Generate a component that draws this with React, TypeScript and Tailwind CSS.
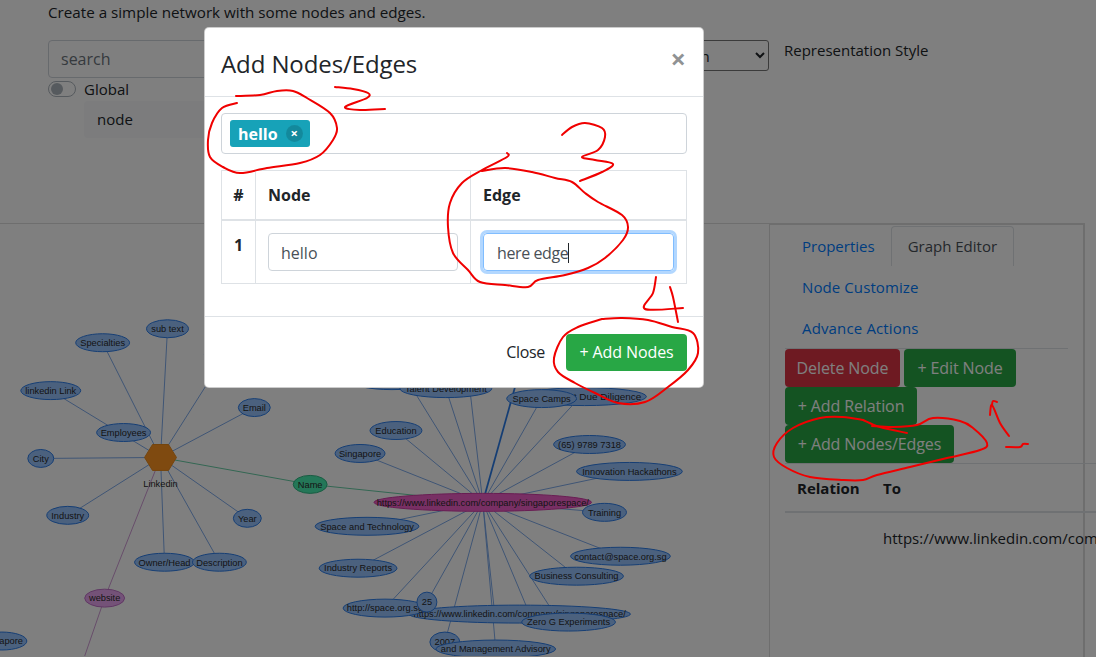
import React from 'react';

type GraphNode = { label: string; x: number; y: number; rx: number; ry?: number; color?: string; size?: number };

const BLUE = { fill: '#97c2fc', stroke: '#2b7ce9' };
const COLORS: Record<string, { fill: string; stroke: string }> = {
  blue: BLUE,
  purple: { fill: '#e9a5f0', stroke: '#c06fc8' },
  green: { fill: '#48eeb0', stroke: '#2fb884' },
  pink: { fill: '#f05fc8', stroke: '#d13aa6' },
};

const nodes: GraphNode[] = [
  { label: 'sub text', x: 167, y: 329, rx: 21 },
  { label: 'Specialties', x: 102, y: 343, rx: 27 },
  { label: 'linkedin Link', x: 50, y: 391, rx: 30 },
  { label: 'Employees', x: 123, y: 433, rx: 27 },
  { label: 'City', x: 40, y: 459, rx: 13 },
  { label: 'Email', x: 254, y: 408, rx: 16 },
  { label: 'Industry', x: 67, y: 516, rx: 21 },
  { label: 'Year', x: 247, y: 519, rx: 14 },
  { label: 'Owner/Head', x: 164, y: 563, rx: 30 },
  { label: 'Description', x: 219, y: 563, rx: 27 },
  { label: 'website', x: 104, y: 599, rx: 20, color: 'purple' },
  { label: 'Name', x: 310, y: 485, rx: 17, color: 'green' },
  { label: 'Singapore', x: 1, y: 642, rx: 25 },
  { label: '', x: 222, y: 355, rx: 18 },
  { label: '', x: 392, y: 381, rx: 42 },
  { label: 'Talent Development', x: 446, y: 389, rx: 46 },
  { label: 'Investment Due Diligence', x: 585, y: 397, rx: 62, size: 10 },
  { label: 'Space Camps', x: 542, y: 399, rx: 35 },
  { label: 'Education', x: 396, y: 431, rx: 26 },
  { label: 'Singapore', x: 360, y: 454, rx: 25 },
  { label: '(65) 9789 7318', x: 590, y: 445, rx: 36 },
  { label: 'Innovation Hackathons', x: 630, y: 472, rx: 53 },
  { label: 'https://www.linkedin.com/company/singaporespace/', x: 483, y: 503, rx: 109, color: 'pink' },
  { label: 'Training', x: 605, y: 513, rx: 22 },
  { label: 'Space and Technology', x: 367, y: 527, rx: 52 },
  { label: 'contact@space.org.sg', x: 621, y: 557, rx: 50 },
  { label: 'Industry Reports', x: 358, y: 569, rx: 39 },
  { label: 'Business Consulting', x: 577, y: 577, rx: 47 },
  { label: 'https://www.linkedin.com/company/singaporespace/', x: 520, y: 615, rx: 111 },
  { label: 'http://space.org.sg', x: 385, y: 609, rx: 42 },
  { label: '25', x: 427, y: 603, rx: 10, ry: 10 },
  { label: 'Zero G Experiments', x: 569, y: 623, rx: 47 },
  { label: '2007', x: 445, y: 643, rx: 15, ry: 10 },
  { label: 'and Management Advisory', x: 496, y: 650, rx: 60 },
];

// far ends of the edges that leave the two hubs
const linkedinEdges = [
  [167, 329], [102, 343], [50, 391], [40, 459], [254, 408], [68, 516], [247, 519], [164, 563], [219, 563], [205, 387],
];
const urlEdges = [
  [446, 389], [410, 385], [470, 389], [581, 397], [542, 399], [396, 431], [360, 454], [590, 445], [630, 472], [605, 513], [367, 527],
  [621, 557], [358, 569], [577, 577], [385, 609], [427, 603], [495, 615], [530, 615], [560, 623], [445, 643], [496, 650],
];

// page coordinates of the red pen marks
const scribbles: number[][][] = [
  [[236, 96], [260, 95], [277, 91], [293, 91], [307, 98], [330, 113], [337, 128], [333, 140], [320, 155], [300, 163], [267, 168], [240, 173], [223, 167], [210, 157], [208, 140], [212, 123], [222, 108], [237, 103]],
  [[335, 87], [353, 89], [368, 93], [367, 98], [345, 107], [360, 110], [385, 109]],
  [[562, 135], [572, 127], [585, 123], [602, 128], [605, 137], [598, 150], [582, 157], [595, 160], [613, 164], [602, 172], [580, 181]],
  [[507, 153], [507, 157], [482, 170], [462, 183], [450, 203], [448, 227], [453, 253], [468, 270], [480, 282], [505, 285], [528, 287], [538, 280], [565, 275], [588, 268], [605, 258], [623, 240], [628, 227], [622, 215], [598, 202], [585, 193], [572, 182], [555, 178], [532, 172], [505, 168], [482, 171]],
  [[656, 277], [653, 293], [645, 309], [683, 308]],
  [[670, 287], [673, 297], [678, 322]],
  [[602, 319], [622, 318], [648, 320], [672, 327], [693, 333], [698, 353], [688, 370], [668, 387], [645, 402], [618, 403], [595, 393], [575, 383], [558, 372], [554, 358], [563, 337], [578, 327], [602, 319]],
  [[863, 420], [843, 417], [820, 418], [793, 428], [777, 443], [774, 457], [787, 468], [810, 477], [843, 480], [863, 480], [877, 475], [910, 467], [947, 458], [980, 450], [987, 443], [973, 428], [960, 421], [933, 418], [917, 425], [893, 427], [872, 426]],
  [[863, 420], [880, 427], [907, 433]],
  [[1009, 436], [1000, 423], [992, 405], [990, 415]],
  [[992, 405], [993, 401], [997, 402]],
  [[1006, 447], [1020, 447], [1023, 444], [1028, 444]],
];

function smoothPath(pts: number[][]) {
  let d = `M${pts[0][0]} ${pts[0][1]}`;
  for (let i = 0; i < pts.length - 1; i++) {
    const p0 = pts[i - 1] || pts[i];
    const p1 = pts[i];
    const p2 = pts[i + 1];
    const p3 = pts[i + 2] || p2;
    const c1x = p1[0] + (p2[0] - p0[0]) / 6;
    const c1y = p1[1] + (p2[1] - p0[1]) / 6;
    const c2x = p2[0] - (p3[0] - p1[0]) / 6;
    const c2y = p2[1] - (p3[1] - p1[1]) / 6;
    d += ` C${c1x} ${c1y} ${c2x} ${c2y} ${p2[0]} ${p2[1]}`;
  }
  return d;
}

function NetworkGraph() {
  return (
    <svg viewBox="0 224 769 433" className="w-[769px] h-[433px] shrink-0 border-t border-[#dcdcdc]">
      {linkedinEdges.map(([x, y], i) => (
        <line key={i} x1={160} y1={458} x2={x} y2={y} stroke="#6fa0e8" strokeWidth="0.9" />
      ))}
      {urlEdges.map(([x, y], i) => (
        <line key={i} x1={483} y1={503} x2={x} y2={y} stroke="#6fa0e8" strokeWidth="0.9" />
      ))}
      <line x1={483} y1={503} x2={516} y2={385} stroke="#2b7ce9" strokeWidth="1.8" />
      <line x1={160} y1={458} x2={310} y2={485} stroke="#55c79a" strokeWidth="0.9" />
      <line x1={310} y1={485} x2={483} y2={503} stroke="#55c79a" strokeWidth="0.9" />
      <line x1={160} y1={458} x2={104} y2={599} stroke="#c98ed0" strokeWidth="0.9" />
      <line x1={104} y1={599} x2={84} y2={657} stroke="#c98ed0" strokeWidth="0.9" />

      {nodes.map((n, i) => {
        const c = COLORS[n.color || 'blue'];
        return (
          <g key={i}>
            <ellipse cx={n.x} cy={n.y} rx={n.rx} ry={n.ry || 9} fill={c.fill} stroke={c.stroke} strokeWidth="1" />
            <text
              x={n.x}
              y={n.y + 3.3}
              textAnchor="middle"
              fontSize={n.size || 9.3}
              fill="#2a2a2a"
              fontFamily="Liberation Sans, sans-serif"
            >
              {n.label}
            </text>
          </g>
        );
      })}

      <polygon points="144,458 152,445 168,445 176,458 168,471 152,471" fill="#ff9420" stroke="#e88a1c" strokeWidth="1" />
      <text x={160} y={488} textAnchor="middle" fontSize="9.3" fill="#2a2a2a" fontFamily="Liberation Sans, sans-serif">
        Linkedin
      </text>
    </svg>
  );
}

function PageBehind() {
  return (
    <div className="w-[1096px]">
      <div className="h-[223px] pl-12">
        <p className="text-[15.2px] leading-6 text-[#212529]">Create a simple network with some nodes and edges.</p>
        <div className="flex mt-4">
          <div className="w-[721px] flex justify-between items-start">
            <div className="w-[300px]">
              <div className="h-[38px] flex items-center rounded border border-[#ced4da] px-3 text-[#6c757d]">search</div>
              <div className="flex items-center gap-2 mt-[2px] h-[18px] text-[15px] text-[#212529]">
                <span className="w-7 h-4 rounded-full border border-[#adb5bd] flex items-center pl-[2px] bg-white">
                  <span className="w-3 h-3 rounded-full bg-[#adb5bd]" />
                </span>
                Global
              </div>
              <div className="ml-9 mt-[3px] h-[37px] flex items-center rounded bg-[#f8f9fa] pl-[13px] text-[15px] text-[#212529]">node</div>
            </div>
            <select defaultValue="Graph" className="w-[110px] h-[31px] bg-white border border-[#767676] rounded-[3px] pl-[2px] text-[15px] text-[#212529]">
              <option>Graph</option>
            </select>
          </div>
          <span className="ml-[15px] text-[15px] leading-5 text-[#212529]">Representation Style</span>
        </div>
      </div>
      <div className="flex">
        <NetworkGraph />
        <div className="w-[316px] h-[434px] shrink-0 border-l border-t-2 border-r-2 border-[#dcdcdc] pl-[15px]">
          <div className="w-[283px] border-b border-[#dee2e6] h-[124px] text-[15px] text-[#007bff]">
            <div className="flex items-end h-[41px]">
              <span className="pl-4 pr-4 h-10 flex items-center border border-transparent">Properties</span>
              <span className="px-4 h-10 flex items-center border border-b-0 border-[#dee2e6] rounded-t text-[#495057] -ml-px">Graph Editor</span>
            </div>
            <div className="pl-[17px] pt-[9px] leading-6 tracking-[0.1px]">Node Customize</div>
            <div className="pl-[17px] pt-[17px] leading-6 tracking-[0.15px]">Advance Actions</div>
          </div>
          <div className="w-[283px] text-white tracking-[-0.1px]">
            <div className="flex gap-1">
              <button className="w-[115px] h-[38px] rounded bg-[#dc3545]">Delete Node</button>
              <button className="w-[112px] h-[38px] rounded bg-[#28a745]">+ Edit Node</button>
            </div>
            <button className="block w-[132px] h-[38px] rounded bg-[#28a745]">+ Add Relation</button>
            <button className="block w-[169px] h-[38px] rounded bg-[#28a745]">+ Add Nodes/Edges</button>
          </div>
          <div className="w-[330px] text-[15px] text-[#212529]">
            <div className="flex h-[50px] items-center pt-[2px] border-t border-b-2 border-[#dee2e6] font-bold">
              <span className="w-[98px] pl-3">Relation</span>
              <span>To</span>
            </div>
            <div className="pl-[98px] pt-[14px] whitespace-nowrap">https://www.linkedin.com/company/singaporespace/</div>
          </div>
        </div>
      </div>
    </div>
  );
}

function AddNodesModal() {
  return (
    <div className="absolute inset-0 bg-black/50 pl-[204px] pt-[27px]">
      <div className="w-[500px] bg-white rounded-[5px] border border-black/20">
        <div className="h-[69px] border-b border-[#dee2e6] flex justify-between pl-4 pr-[17px] pt-[18px]">
          <h5 className="text-2xl leading-9 font-medium tracking-[-0.1px] text-[#212529]">Add Nodes/Edges</h5>
          <span className="text-[27px] leading-[25px] font-bold text-[#212529]/50">×</span>
        </div>
        <div className="p-4 h-[219px]">
          <div className="h-[41px] rounded border border-[#ced4da] flex items-center pl-2">
            <span className="w-[80px] h-[27px] rounded-[3px] bg-[#17a2b8] flex items-center pl-2 text-white font-bold">
              hello
              <span className="ml-2 w-[17px] h-[17px] rounded-full bg-black/15 flex items-center justify-center text-[13px]">×</span>
            </span>
          </div>
          <div className="mt-4 w-[466px] border border-[#dee2e6] text-[#212529]">
            <div className="flex h-[50px] border-b-2 border-[#dee2e6] font-bold items-center">
              <span className="w-[34px] self-stretch flex items-center justify-center border-r border-[#dee2e6]">#</span>
              <span className="w-[215px] self-stretch flex items-center pl-3 border-r border-[#dee2e6]">Node</span>
              <span className="pl-3">Edge</span>
            </div>
            <div className="flex h-[62px]">
              <span className="w-[34px] border-r border-[#dee2e6] font-bold text-center pt-[12px]">1</span>
              <div className="w-[215px] border-r border-[#dee2e6] pl-3 pt-[12px]">
                <div className="w-[190px] h-[38px] rounded border border-[#ced4da] flex items-center px-3 pt-[2px] text-[#495057]">hello</div>
              </div>
              <div className="pl-3 pt-[12px]">
                <div className="w-[191px] h-[38px] rounded border border-[#80bdff] ring-[3px] ring-[#007bff]/30 flex items-center px-[13px] pt-[2px] text-[#495057] tracking-[-0.4px]">
                  here edge
                  <span className="w-px h-5 bg-[#212529]" />
                </div>
              </div>
            </div>
          </div>
        </div>
        <div className="h-[71px] border-t border-[#dee2e6] flex items-center justify-end pr-4 gap-[21px] tracking-[-0.1px]">
          <span className="text-[#212529] tracking-[-0.3px]">Close</span>
          <button className="w-[121px] h-[37px] rounded bg-[#28a745] text-white">+ Add Nodes</button>
        </div>
      </div>
    </div>
  );
}

export default function App() {
  return (
    <div className="relative w-[1096px] h-[657px] overflow-hidden bg-white font-['Open_Sans',sans-serif]">
      <PageBehind />
      <AddNodesModal />
      {/* pen marks drawn on the screenshot */}
      <svg viewBox="0 0 1096 657" className="absolute inset-0 w-[1096px] h-[657px] pointer-events-none">
        {scribbles.map((pts, i) => (
          <path key={i} d={smoothPath(pts)} fill="none" stroke="#f00000" strokeWidth="2" strokeLinecap="round" />
        ))}
      </svg>
    </div>
  );
}
